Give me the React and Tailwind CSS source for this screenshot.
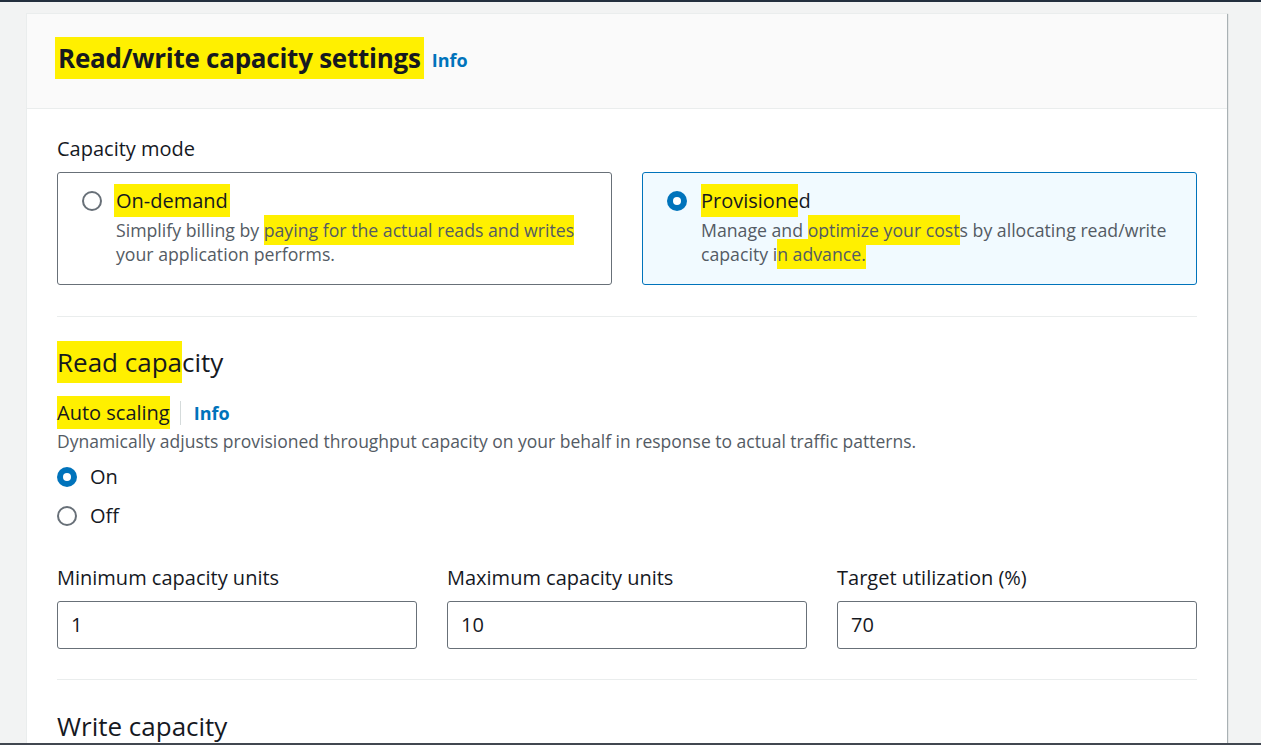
import React from 'react';

const hl = 'bg-[#fff000] py-[3px]';

const Radio = ({ checked }) =>
    checked ? (
        <span className="w-5 h-5 rounded-full bg-[#0073bb] flex items-center justify-center shrink-0">
            <span className="w-2 h-2 rounded-full bg-white" />
        </span>
    ) : (
        <span className="w-5 h-5 rounded-full border-2 border-[#687078] bg-white shrink-0" />
    );

const ModeCard = ({ checked, title, children }) => (
    <div
        className={
            'flex-1 rounded-[3px] border pl-[24px] pr-6 pt-[16px] pb-[18px] ' +
            (checked ? 'border-[#0073bb] bg-[#f1faff]' : 'border-[#687078] bg-white')
        }
    >
        <div className="flex items-center gap-[14px] h-6">
            <Radio checked={checked} />
            <span className="text-[20px] leading-6 text-[#16191f]">{title}</span>
        </div>
        <p className="pl-[34px] mt-[5px] text-[17.7px] leading-6 text-[#545b64]">{children}</p>
    </div>
);

const NumberField = ({ label, value }) => (
    <div className="flex-1">
        <div className="text-[20px] leading-6 text-[#16191f]">{label}</div>
        <div className="mt-[11px] h-12 rounded-[3px] border border-[#687078] bg-white flex items-center px-[13px] text-[20px] text-[#16191f]">
            {value}
        </div>
    </div>
);

export default function App() {
    return (
        <div
            className="h-screen overflow-hidden flex flex-col bg-[#f2f3f3]"
            style={{ fontFamily: '"Open Sans", "Liberation Sans", sans-serif' }}
        >
            <div className="h-[2px] bg-[#232f3e] shrink-0" />
            <div className="flex-1 overflow-hidden pl-[26px] pr-[34px] pt-[11px]">
                <div className="bg-white border-l border-t border-[#eaeded] shadow-[1px_1px_1px_0_rgba(0,28,36,0.3)]">
                    {/* header */}
                    <div className="h-[95px] bg-[#fafafa] border-b border-[#eaeded] flex items-center px-[30px] pb-[6px]">
                        <h1 className="text-[26px] font-bold text-[#16191f] tracking-[-0.25px]">
                            <span className={hl + ' px-[3px] -ml-[2px]'}>Read/write capacity settings</span>
                        </h1>
                        <a className="ml-[8px] mt-[4px] text-[18px] font-bold text-[#0073bb]">Info</a>
                    </div>

                    <div className="px-[30px] pt-[28px]">
                        <div className="text-[20px] leading-6 text-[#16191f]">Capacity mode</div>
                        <div className="mt-[11px] flex gap-[30px]">
                            <ModeCard checked={false} title={<span className={hl + ' px-[2px] -ml-[2px]'}>On-demand</span>}>
                                Simplify billing by <span className={hl}>paying for the actual reads and writes</span>
                                <br />
                                your application performs.
                            </ModeCard>
                            <ModeCard
                                checked
                                title={
                                    <>
                                        <span className={hl}>Provisione</span>d
                                    </>
                                }
                            >
                                Manage and <span className={hl}>optimize your cost</span>s by allocating read/write
                                <br />
                                capacity i<span className={hl}>n advance.</span>
                            </ModeCard>
                        </div>

                        <div className="mt-[31px] border-t border-[#eaeded]" />

                        {/* read capacity */}
                        <h2 className="mt-[29px] text-[26px] leading-8 text-[#16191f]">
                            <span className={hl}>Read capa</span>city
                        </h2>
                        <div className="mt-[23px] flex items-center h-6">
                            <span className="text-[20px] leading-6 text-[#16191f] pr-[10px]">
                                <span className={hl}>Auto scaling</span>
                            </span>
                            <span className="h-6 border-l border-[#d5dbdb]" />
                            <a className="pl-[13px] text-[18px] font-bold text-[#0073bb]">Info</a>
                        </div>
                        <p className="mt-[4px] text-[17.5px] leading-6 text-[#545b64]">
                            Dynamically adjusts provisioned throughput capacity on your behalf in response to actual traffic patterns.
                        </p>
                        <div className="mt-[4px]">
                            <div className="h-[39px] flex items-center gap-[13px]">
                                <Radio checked />
                                <span className="text-[20px] text-[#16191f]">On</span>
                            </div>
                            <div className="h-[39px] flex items-center gap-[13px]">
                                <Radio checked={false} />
                                <span className="text-[20px] text-[#16191f]">Off</span>
                            </div>
                        </div>

                        <div className="mt-[31px] flex gap-[30px]">
                            <NumberField label="Minimum capacity units" value="1" />
                            <NumberField label="Maximum capacity units" value="10" />
                            <NumberField label="Target utilization (%)" value="70" />
                        </div>

                        <div className="mt-[30px] border-t border-[#eaeded]" />

                        <h2 className="mt-[30px] text-[26px] leading-8 text-[#16191f]">Write capacity</h2>
                        <div className="h-40" />
                    </div>
                </div>
            </div>
            <div className="h-[2px] bg-[#414750] shrink-0" />
        </div>
    );
}
